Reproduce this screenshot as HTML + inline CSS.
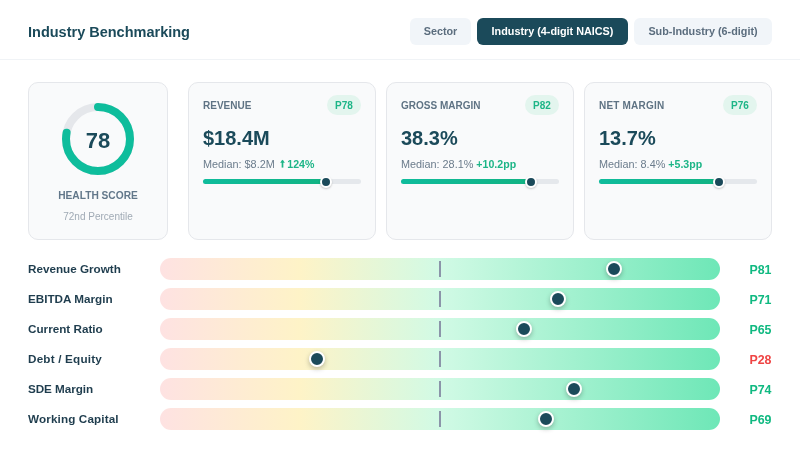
<!DOCTYPE html>
<html><head><meta charset="utf-8">
<style>
*{margin:0;padding:0;box-sizing:border-box}
html,body{width:800px;height:450px;overflow:hidden;background:#fff;will-change:transform;font-family:"Liberation Sans",sans-serif}
.abs{position:absolute}
#hdr{position:absolute;left:0;top:0;width:800px;height:60px;border-bottom:1px solid #f0f3f6}
#title{position:absolute;left:28px;top:24px;font-size:14.5px;font-weight:bold;color:#1b4a5a;white-space:nowrap;line-height:17px}
.tab{position:absolute;top:18px;height:27px;border-radius:6px;background:#f1f5f9;color:#5b6d7e;font-size:10.8px;font-weight:bold;line-height:27px;text-align:center;white-space:nowrap}
.tab.on{background:#1b4a5a;color:#fff}
.card{position:absolute;top:82px;height:158px;border:1px solid #e5e7eb;border-radius:10px;background:#f9fafb}
.lbl{position:absolute;left:14px;top:17px;font-size:10px;font-weight:bold;color:#5f7384;white-space:nowrap;line-height:12px}
.badge{position:absolute;right:14px;top:12px;width:34px;height:20px;border-radius:10px;background:#e3f5ee;color:#1db587;font-size:10px;font-weight:bold;line-height:21px;text-align:center}
.val{position:absolute;left:14px;top:44px;font-size:20px;font-weight:bold;color:#1b4a5a;white-space:nowrap;line-height:22px}
.med{position:absolute;left:14px;top:75px;font-size:10.85px;color:#6b7c8c;white-space:nowrap;line-height:12px}
.med b{color:#1db587;font-size:10.6px}
.trk{position:absolute;left:14px;top:96px;width:158px;height:5px;border-radius:3px;background:#e5e8ec}
.fill{position:absolute;left:0;top:0;height:5px;border-radius:3px;background:linear-gradient(90deg,#0fbc9c,#12b383)}
.knob{position:absolute;width:12px;height:12px;border-radius:50%;background:#1b4a5a;border:2px solid #fff;box-shadow:0 1px 2px rgba(0,0,0,.2)}
.row{position:absolute;left:0;width:800px;height:22px}
.rl{position:absolute;left:28px;top:4px;font-size:11.7px;font-weight:bold;color:#1f3d4e;white-space:nowrap;line-height:14px}
.bar{position:absolute;left:160px;top:0;width:560px;height:22px;border-radius:11px;background:linear-gradient(90deg,#fee2e2 0%,#fef3c7 25%,#d1fae5 50%,#6ee7b7 100%)}
.mid{position:absolute;left:279px;top:3px;width:2px;height:16px;background:#8b95a9}
.rk{position:absolute;top:3px;width:16px;height:16px;border-radius:50%;background:#1b4a5a;border:2px solid #fff;box-shadow:0 2px 5px rgba(0,0,0,.25)}
.rp{position:absolute;right:28.5px;top:4.5px;font-size:12.4px;font-weight:bold;color:#10b981;line-height:14px;text-align:right}
</style></head><body>
<div id="hdr">
  <div id="title">Industry Benchmarking</div>
  <div class="tab" style="left:410px;width:61px">Sector</div>
  <div class="tab on" style="left:477px;width:151px">Industry (4-digit NAICS)</div>
  <div class="tab" style="left:634px;width:138px">Sub-Industry (6-digit)</div>
</div>

<div class="card" style="left:28px;width:140px">
  <svg class="abs" style="left:32px;top:19px" width="74" height="74" viewBox="0 0 74 74">
    <circle cx="37" cy="37" r="32" fill="none" stroke="#e5e7eb" stroke-width="8"/>
    <circle cx="37" cy="37" r="32" fill="none" stroke="#0ebd9c" stroke-width="8" stroke-linecap="round" stroke-dasharray="156.8 201.06" transform="rotate(-90 37 37)"/>
  </svg>
  <div class="abs" style="left:0;width:138px;top:45.5px;text-align:center;font-size:22px;font-weight:bold;color:#1b4a5a;line-height:24px">78</div>
  <div class="abs" style="left:0;width:138px;top:106px;text-align:center;font-size:10.2px;font-weight:bold;color:#62778a;line-height:13px">HEALTH SCORE</div>
  <div class="abs" style="left:0;width:138px;top:128px;text-align:center;font-size:10px;color:#a0aab5;line-height:12px">72nd Percentile</div>
</div>

<div class="card" style="left:188px;width:188px">
  <div class="lbl">REVENUE</div>
  <div class="badge">P78</div>
  <div class="val">$18.4M</div>
  <div class="med">Median: $8.2M <svg style="position:relative;top:0px;margin-left:2px" width="5" height="9" viewBox="0 0 5 9"><path d="M2.5 1.5V8.6" stroke="#1db587" stroke-width="1.7"/><path d="M0.1 3.8L2.5 0.8L4.9 3.8Z" fill="#1db587"/></svg><b style="margin-left:2.5px">124%</b></div>
  <div class="trk"><div class="fill" style="width:123px"></div><div class="knob" style="left:117px;top:-3.5px"></div></div>
</div>

<div class="card" style="left:386px;width:188px">
  <div class="lbl">GROSS MARGIN</div>
  <div class="badge">P82</div>
  <div class="val">38.3%</div>
  <div class="med">Median: 28.1% <b>+10.2pp</b></div>
  <div class="trk"><div class="fill" style="width:130px"></div><div class="knob" style="left:124px;top:-3.5px"></div></div>
</div>

<div class="card" style="left:584px;width:188px">
  <div class="lbl" style="letter-spacing:0.2px">NET MARGIN</div>
  <div class="badge">P76</div>
  <div class="val">13.7%</div>
  <div class="med">Median: 8.4% <b>+5.3pp</b></div>
  <div class="trk"><div class="fill" style="width:120px"></div><div class="knob" style="left:114px;top:-3.5px"></div></div>
</div>

<div class="row" style="top:258px"><div class="rl">Revenue Growth</div><div class="bar"><div class="mid"></div><div class="rk" style="left:446px"></div></div><div class="rp">P81</div></div>
<div class="row" style="top:288px"><div class="rl">EBITDA Margin</div><div class="bar"><div class="mid"></div><div class="rk" style="left:390px"></div></div><div class="rp">P71</div></div>
<div class="row" style="top:318px"><div class="rl">Current Ratio</div><div class="bar"><div class="mid"></div><div class="rk" style="left:356px"></div></div><div class="rp">P65</div></div>
<div class="row" style="top:348px"><div class="rl" style="letter-spacing:0.2px">Debt / Equity</div><div class="bar"><div class="mid"></div><div class="rk" style="left:149px"></div></div><div class="rp" style="color:#ef4444">P28</div></div>
<div class="row" style="top:378px"><div class="rl" style="letter-spacing:-0.06px">SDE Margin</div><div class="bar"><div class="mid"></div><div class="rk" style="left:406px"></div></div><div class="rp">P74</div></div>
<div class="row" style="top:408px"><div class="rl" style="letter-spacing:0.13px">Working Capital</div><div class="bar"><div class="mid"></div><div class="rk" style="left:378px"></div></div><div class="rp">P69</div></div>
</body></html>
